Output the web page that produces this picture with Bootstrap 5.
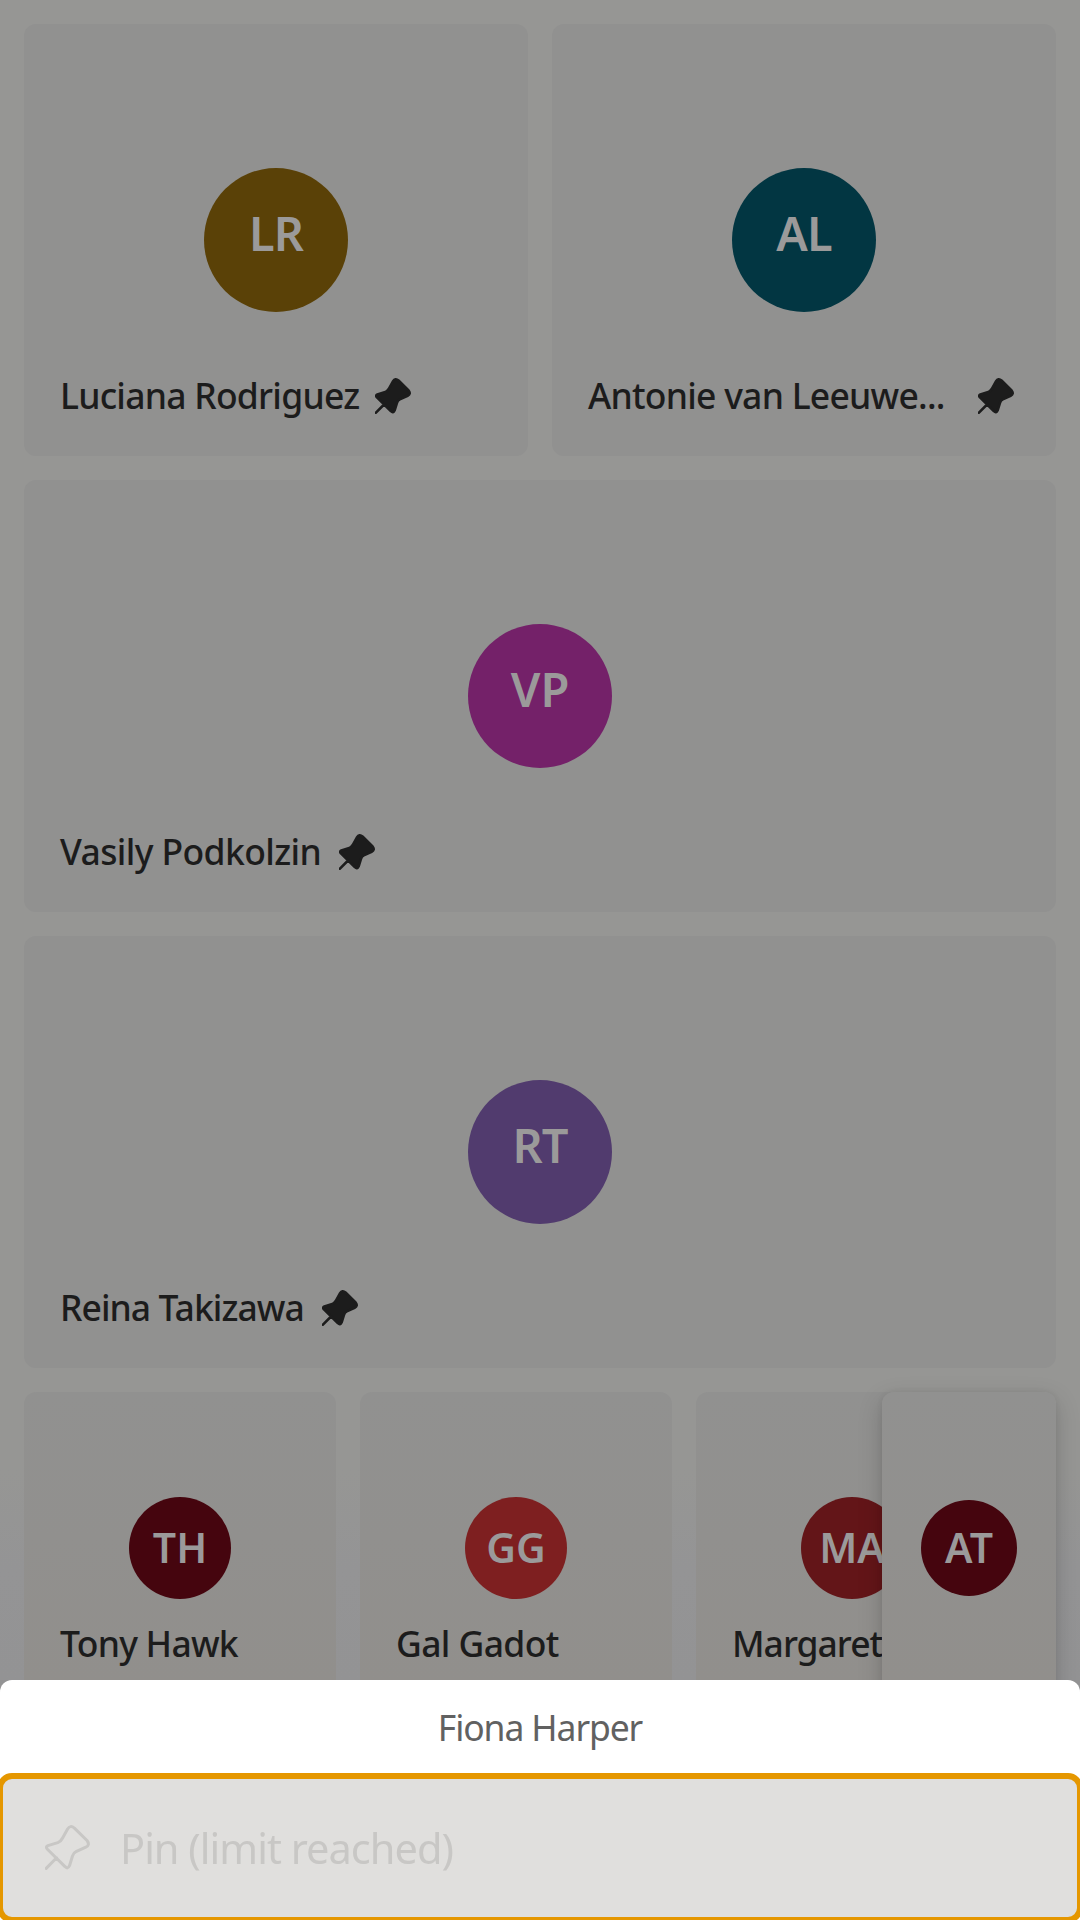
<!DOCTYPE html>
<html lang="en">
<head>
<meta charset="utf-8">
<meta name="viewport" content="width=device-width, initial-scale=1">
<title>Meeting participants</title>
<link rel="stylesheet" href="https://cdn.jsdelivr.net/npm/bootstrap@5.3.0/dist/css/bootstrap.min.css">
<style>
body{font-family:"Noto Sans","Open Sans",sans-serif;background:#969694;color:#1c1c1c}
.stage{height:1920px;padding:24px;gap:24px;background:linear-gradient(#969694 0,#969694 1470px,#949495 1570px,#939394 1680px)}
.tiles{gap:24px}
.tile{background:#919190;border-radius:12px;min-width:0;flex:1 1 0}
.tile-lg{height:432px;padding:144px 42px 37px 36px}
.tile-sm{flex:0 0 312px;height:432px;padding:105px 36px 0;background:linear-gradient(#919190,#918f8c 290px)}
.avatar{color:#9b9a9a;font-weight:600;line-height:1;flex:none}
.avatar-lg{width:144px;height:144px;font-size:47px;padding-bottom:13px;margin-left:6px}
.avatar-sm{width:102px;height:102px;font-size:41px;padding-bottom:1px}
.avatar-xs{width:96px;height:96px;font-size:41px;padding-bottom:1px}
.tight{letter-spacing:-.9px}
.gold{background:#5a4107}.teal{background:#023642}.magenta{background:#742169}.violet{background:#513b6e}
.wine{background:#45050e}.red{background:#7e1f20}.brick{background:#631518}
.person{font-size:35.5px;line-height:48px;font-weight:500;letter-spacing:-.76px;gap:16px;white-space:nowrap}
.person-sm{margin-top:20px}
.ls-a{letter-spacing:-.62px}.ls-b{letter-spacing:-.96px}.ls-c{letter-spacing:-1px}
.pin-solid{width:36px;height:36px;margin-top:2px;flex:none;stroke-width:3.2}
.pin-gap{gap:18px}
.self-tile{width:174px;height:432px;top:0;right:0;padding-top:108px;border-radius:12px;background:linear-gradient(#919190,#918f8c 290px);box-shadow:0 0 6px rgba(0,0,0,.06),0 8px 24px rgba(0,0,0,.18)}
.sheet{height:240px;border-radius:12px 12px 0 0}
.sheet-title{height:96px;font-size:35.5px;letter-spacing:-1.1px;color:#616161;padding-bottom:1px}
.sheet-item{height:144px;padding:0 45px;gap:30px;border-radius:12px;background:#e0dfdd;color:#c8c7c5;font-size:41.5px;letter-spacing:-.97px;outline:6px solid #e59700;outline-offset:-3px}
.pin-line{width:45px;height:45px;flex:none;stroke-width:3;margin-bottom:2px}
</style>
</head>
<body class="overflow-hidden">
<svg class="d-none" aria-hidden="true">
  <symbol id="pin-body" viewBox="0 0 45 45" overflow="visible">
    <path d="M2.9 20.6 L12.8 17.6 Q16 16.3 17.6 13 L22.6 4 Q25.2 -.3 29.4 3.1 L42 15.5 Q45.3 20 40.8 22.2 L31 26.7 Q28.4 28 27.5 31 L24.5 40.7 Q22.6 44.6 20 41.6 L2.4 24.2 Q.2 21.8 2.9 20.6Z M11.6 32.8 L1.2 43.4"/>
  </symbol>
</svg>

<main class="stage d-flex flex-column">
  <div class="tiles d-flex">
    <section class="tile tile-lg d-flex flex-column justify-content-between">
      <div class="avatar avatar-lg gold tight rounded-circle d-flex align-items-center justify-content-center align-self-center">LR</div>
      <div class="person d-flex align-items-center"><span>Luciana Rodriguez</span>
        <svg class="pin-solid" fill="#1c1c1c" stroke="#1c1c1c" stroke-linecap="round" stroke-linejoin="round"><use href="#pin-body"/></svg></div>
    </section>
    <section class="tile tile-lg d-flex flex-column justify-content-between">
      <div class="avatar avatar-lg teal tight rounded-circle d-flex align-items-center justify-content-center align-self-center">AL</div>
      <div class="person d-flex align-items-center justify-content-between"><span>Antonie van Leeuwe...</span>
        <svg class="pin-solid" fill="#1c1c1c" stroke="#1c1c1c" stroke-linecap="round" stroke-linejoin="round"><use href="#pin-body"/></svg></div>
    </section>
  </div>
  <div class="tiles d-flex">
    <section class="tile tile-lg d-flex flex-column justify-content-between">
      <div class="avatar avatar-lg magenta rounded-circle d-flex align-items-center justify-content-center align-self-center">VP</div>
      <div class="person pin-gap d-flex align-items-center"><span class="ls-a">Vasily Podkolzin</span>
        <svg class="pin-solid" fill="#1c1c1c" stroke="#1c1c1c" stroke-linecap="round" stroke-linejoin="round"><use href="#pin-body"/></svg></div>
    </section>
  </div>
  <div class="tiles d-flex">
    <section class="tile tile-lg d-flex flex-column justify-content-between">
      <div class="avatar avatar-lg violet tight rounded-circle d-flex align-items-center justify-content-center align-self-center">RT</div>
      <div class="person pin-gap d-flex align-items-center"><span class="ls-b">Reina Takizawa</span>
        <svg class="pin-solid" fill="#1c1c1c" stroke="#1c1c1c" stroke-linecap="round" stroke-linejoin="round"><use href="#pin-body"/></svg></div>
    </section>
  </div>
  <div class="tiles d-flex position-relative">
    <section class="tile tile-sm d-flex flex-column">
      <div class="avatar avatar-sm wine rounded-circle d-flex align-items-center justify-content-center align-self-center">TH</div>
      <div class="person person-sm">Tony Hawk</div>
    </section>
    <section class="tile tile-sm d-flex flex-column">
      <div class="avatar avatar-sm red rounded-circle d-flex align-items-center justify-content-center align-self-center">GG</div>
      <div class="person person-sm ls-a">Gal Gadot</div>
    </section>
    <section class="tile tile-sm d-flex flex-column">
      <div class="avatar avatar-sm brick rounded-circle d-flex align-items-center justify-content-center align-self-center">MA</div>
      <div class="person person-sm ls-c">Margaret</div>
    </section>
    <section class="self-tile position-absolute d-flex justify-content-center">
      <div class="avatar avatar-xs wine rounded-circle d-flex align-items-center justify-content-center">AT</div>
    </section>
  </div>
</main>

<div class="sheet fixed-bottom bg-white">
  <div class="sheet-title d-flex align-items-center justify-content-center">Fiona Harper</div>
  <div class="sheet-item d-flex align-items-center">
    <svg class="pin-line" fill="none" stroke="#c8c7c5" stroke-linecap="round" stroke-linejoin="round"><use href="#pin-body"/></svg>
    <span>Pin (limit reached)</span>
  </div>
</div>
<script src="https://cdn.jsdelivr.net/npm/bootstrap@5.3.0/dist/js/bootstrap.bundle.min.js"></script>
</body>
</html>
